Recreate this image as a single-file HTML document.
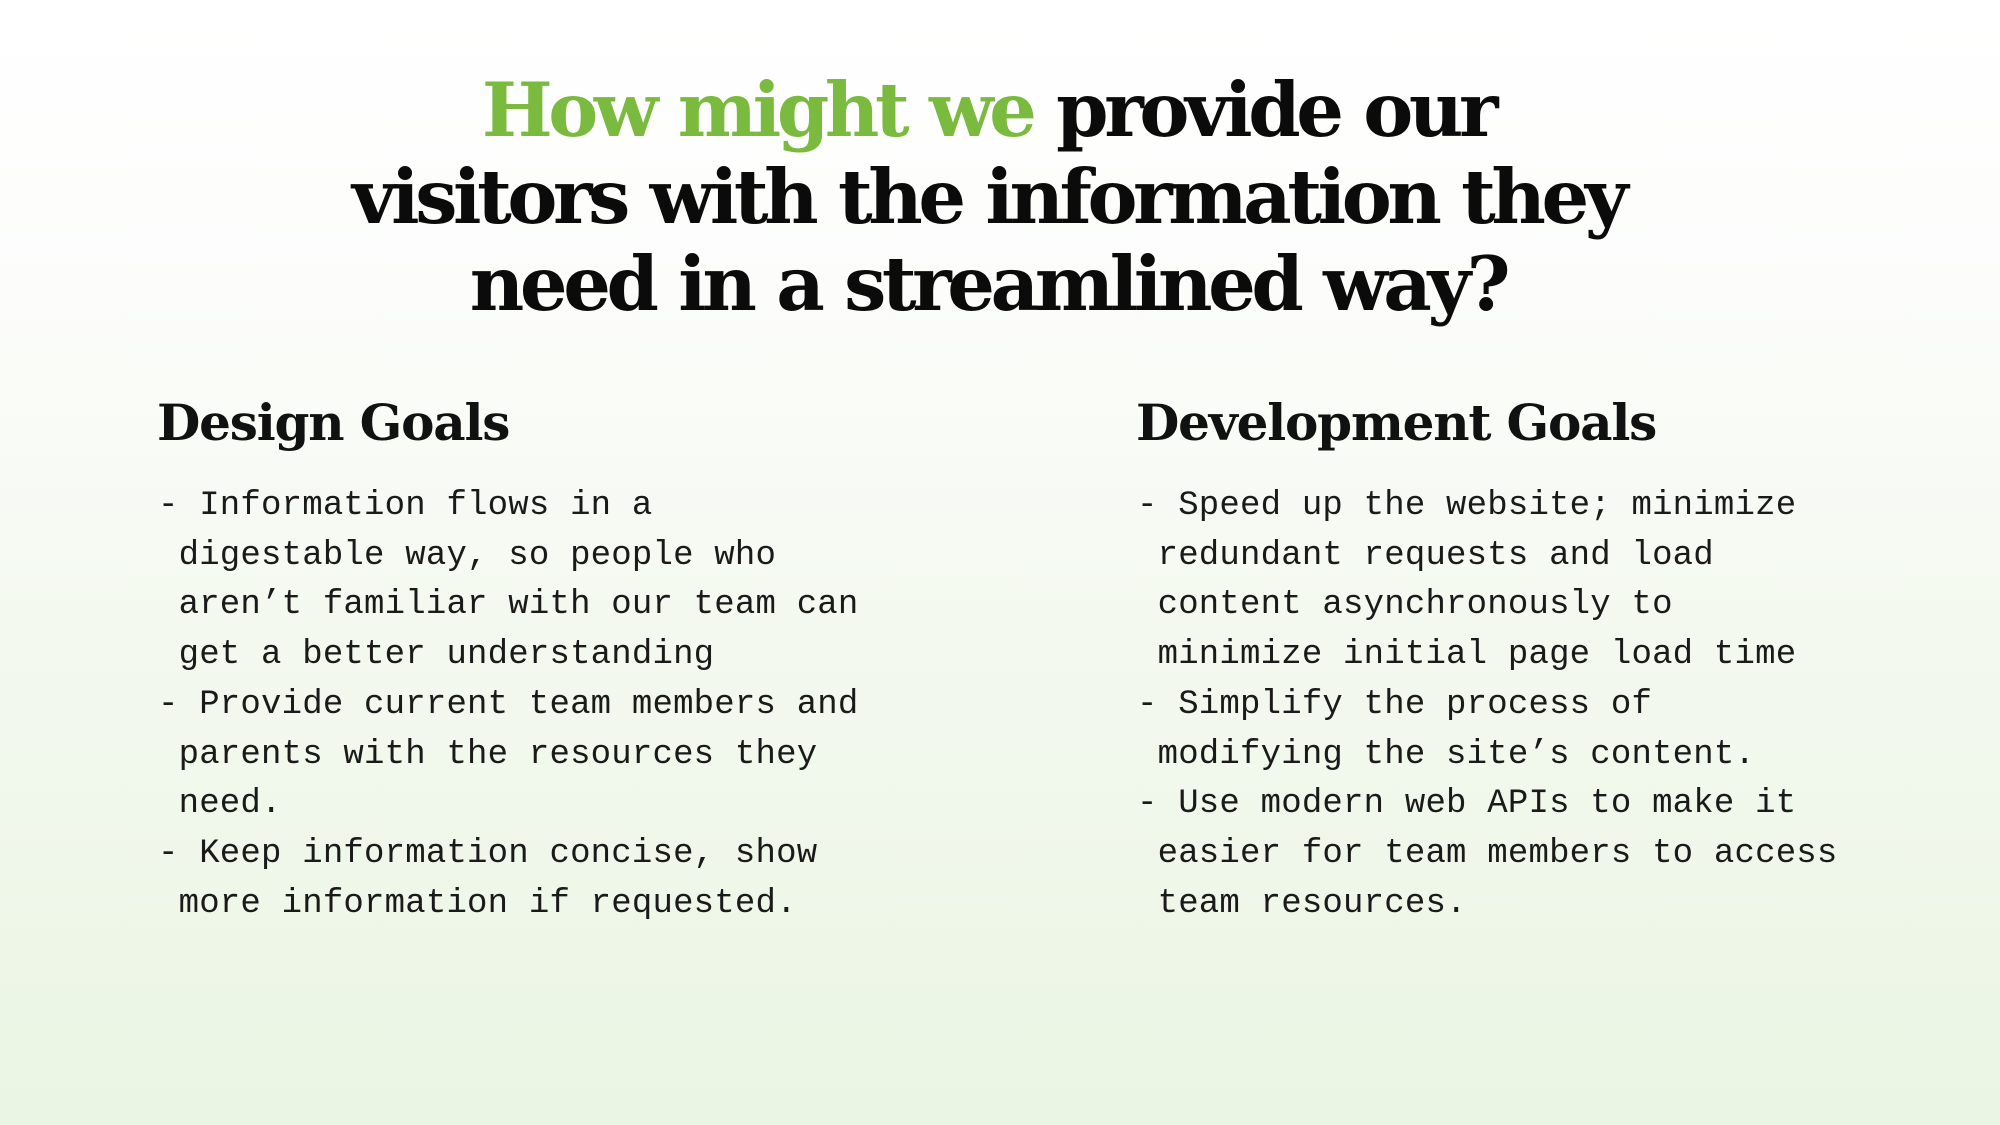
<!DOCTYPE html>
<html><head><meta charset="utf-8"><style>
html,body{margin:0;padding:0}
body{width:2000px;height:1125px;overflow:hidden;position:relative;
background:linear-gradient(180deg,#ffffff 0%,#fcfdfb 25%,#f4f9f0 55%,#eaf5e3 100%);}
.title{position:absolute;left:0;width:1976px;top:67px;text-align:center;
font-family:"DejaVu Serif","Liberation Serif",serif;font-weight:bold;font-size:75px;line-height:87px;color:#0b0b0b;letter-spacing:-4.4px;word-spacing:2px}
.title .g{color:#7aba3f}
h2{position:absolute;margin:0;font-family:"DejaVu Serif","Liberation Serif",serif;font-weight:bold;font-size:50px;line-height:60px;color:#111;top:393px;letter-spacing:-1.2px}
pre{position:absolute;margin:0;font-family:"Liberation Mono",monospace;font-size:34px;line-height:49.7px;color:#1a1a1a;top:482px;letter-spacing:0.2px}
</style></head><body>
<div class="title"><span class="g">How might we</span> provide our<br>visitors with the information they<br>need in a streamlined way?</div>
<h2 style="left:157px">Design Goals</h2>
<h2 style="left:1136px">Development Goals</h2>
<pre style="left:158px">- Information flows in a
 digestable way, so people who
 aren’t familiar with our team can
 get a better understanding
- Provide current team members and
 parents with the resources they
 need.
- Keep information concise, show
 more information if requested.</pre>
<pre style="left:1137px">- Speed up the website; minimize
 redundant requests and load
 content asynchronously to
 minimize initial page load time
- Simplify the process of
 modifying the site’s content.
- Use modern web APIs to make it
 easier for team members to access
 team resources.</pre>
</body></html>
